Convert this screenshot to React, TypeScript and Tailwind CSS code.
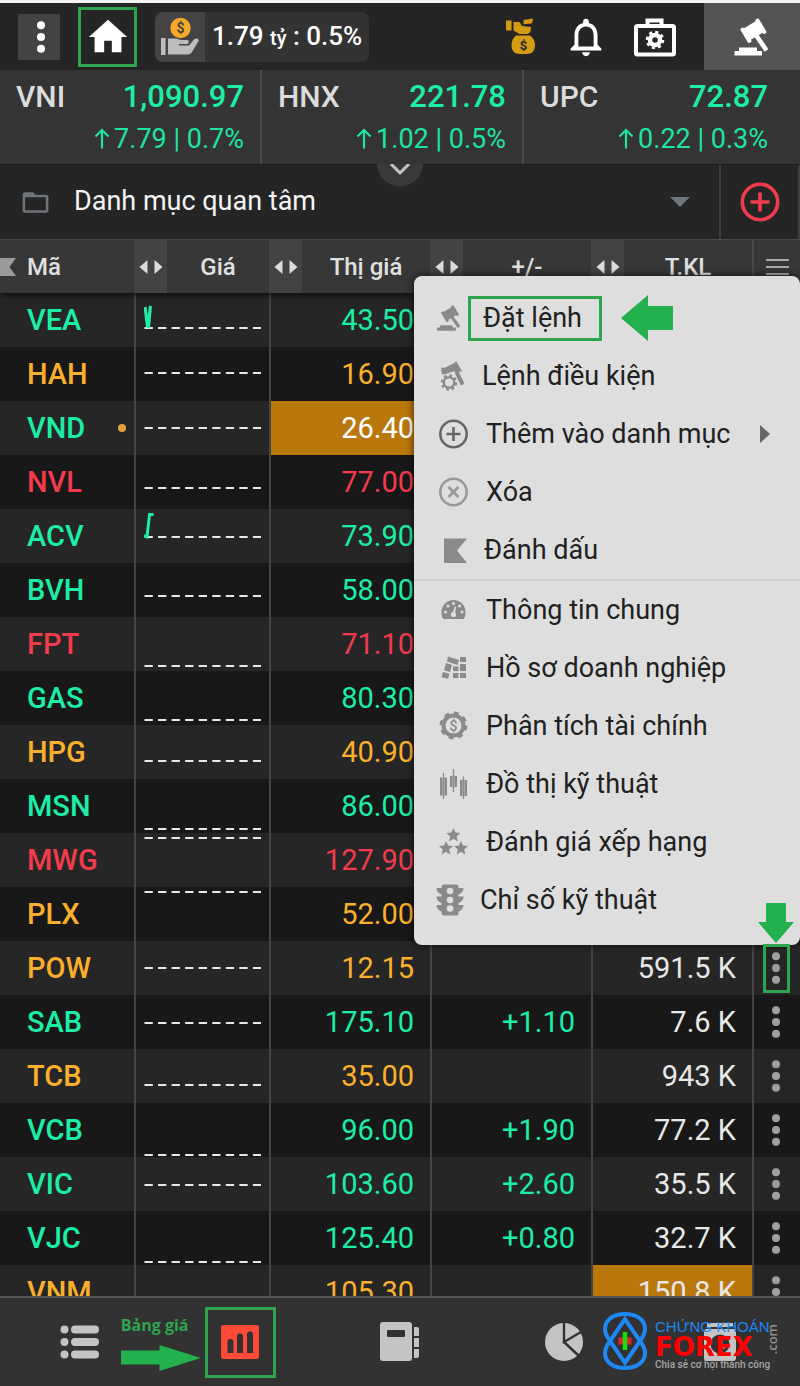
import type { ReactNode } from "react";
import { MdFolderOpen, MdHome, MdNotificationsNone } from "react-icons/md";

const UP = "text-[#1ceea6]";
const DOWN = "text-[#f23b4c]";
const FLAT = "text-[#fbb02d]";

type Stock = {
  code: string;
  color: string;
  price: string;
  change?: string;
  volume?: string;
  line?: number; // height of the reference line inside the sparkline
  spark?: string;
  dot?: boolean;
  hotPrice?: boolean;
  hotVolume?: boolean;
  marked?: boolean;
};

const stocks: Stock[] = [
  { code: "VEA", color: UP, price: "43.50", line: 35, spark: "M1 14L3.500 34L6.500 13L4.500 35" },
  { code: "HAH", color: FLAT, price: "16.90", line: 26 },
  { code: "VND", color: UP, price: "26.40", line: 27, dot: true, hotPrice: true },
  { code: "NVL", color: DOWN, price: "77.00", line: 33 },
  { code: "ACV", color: UP, price: "73.90", line: 28, spark: "M0 26.500L3 28L5.500 5.500L9.500 5.500" },
  { code: "BVH", color: UP, price: "58.00", line: 33 },
  { code: "FPT", color: DOWN, price: "71.10", line: 49 },
  { code: "GAS", color: UP, price: "80.30", line: 49 },
  { code: "HPG", color: FLAT, price: "40.90", line: 36 },
  { code: "MSN", color: UP, price: "86.00", line: 50 },
  { code: "MWG", color: DOWN, price: "127.90", line: 5 },
  { code: "PLX", color: FLAT, price: "52.00", line: 5 },
  { code: "POW", color: FLAT, price: "12.15", volume: "591.5 K", line: 27, marked: true },
  { code: "SAB", color: UP, price: "175.10", change: "+1.10", volume: "7.6 K", line: 28 },
  { code: "TCB", color: FLAT, price: "35.00", volume: "943 K", line: 36 },
  { code: "VCB", color: UP, price: "96.00", change: "+1.90", volume: "77.2 K", line: 52 },
  { code: "VIC", color: UP, price: "103.60", change: "+2.60", volume: "35.5 K", line: 28 },
  { code: "VJC", color: UP, price: "125.40", change: "+0.80", volume: "32.7 K", line: 51 },
  { code: "VNM", color: FLAT, price: "105.30", volume: "150.8 K", hotVolume: true },
];

const indexes = [
  { name: "VNI", value: "1,090.97", diff: "7.79", percent: "0.7%" },
  { name: "HNX", value: "221.78", diff: "1.02", percent: "0.5%" },
  { name: "UPC", value: "72.87", diff: "0.22", percent: "0.3%" },
];

const GavelHead = () => (
  <>
    <g transform="rotate(-31 19.700 12.300)">
      <rect x="11" y="5.500" width="17" height="13.500" />
      <rect x="8.500" y="4" width="4" height="17" rx="1.500" />
      <rect x="26" y="4" width="4" height="17" rx="1.500" />
    </g>
    <path d="M22 17L32.500 32.500" stroke="currentColor" strokeWidth="4.600" />
  </>
);

const Gavel = ({ className }: { className: string }) => (
  <svg viewBox="0 0 36 38" fill="currentColor" className={className}>
    <GavelHead />
    <path d="M5 29.500h18v3.500h5v4.500H.5V33H5z" />
  </svg>
);

const Dots = ({ className }: { className: string }) => (
  <svg viewBox="0 0 10 32" fill="currentColor" className={className}>
    <circle cx="5" cy="4.300" r="4" />
    <circle cx="5" cy="16" r="4" />
    <circle cx="5" cy="27.700" r="4" />
  </svg>
);

const STAR = "M0-7L2-2.400 7-2 3.200 1.500 4.400 6.500 0 3.800-4.400 6.500-3.200 1.500-7-2-2-2.400z";

const GavelGearIcon = () => (
  <svg width="30" height="34" viewBox="0 0 30 34" fill="currentColor">
    <path d="M5 8.500L8 9 18.500 4 20 2 26 12 23 13 17 12.500 10 15 6 15.500z" />
    <path d="M21 14L26 24" stroke="currentColor" strokeWidth="4" strokeLinecap="round" />
    <circle cx="13" cy="23.500" r="5.200" fill="none" stroke="currentColor" strokeWidth="2.300" />
    <circle cx="13" cy="23.500" r="7" fill="none" stroke="currentColor" strokeWidth="2.500" strokeDasharray="2.750 2.750" />
  </svg>
);

const PlusIcon = () => (
  <svg width="34" height="34" viewBox="0 0 34 34" fill="none" stroke="#666" strokeWidth="2.600">
    <circle cx="17.500" cy="17" r="13.200" />
    <path d="M17.500 10v14M10.500 17h14" />
  </svg>
);

const RemoveIcon = () => (
  <svg width="34" height="34" viewBox="0 0 34 34" fill="none" stroke="#999" strokeWidth="2.600">
    <circle cx="17.500" cy="17" r="13.200" />
    <path d="M12.500 12l10 10M22.500 12l-10 10" />
  </svg>
);

const FlagIcon = () => (
  <svg width="32" height="34" viewBox="0 0 32 34" fill="currentColor">
    <path d="M8 5.500h23L21 17.500l10 12.500H8z" />
  </svg>
);

const GaugeIcon = () => (
  <svg width="34" height="34" viewBox="0 0 34 34">
    <path d="M7.500 26C5.500 24 5.500 21.500 5.500 19a12 12 0 0124 0c0 2.500 0 5-2 7z" fill="currentColor" />
    <g fill="#dedede">
      <circle cx="9.500" cy="19" r="1.500" />
      <circle cx="12" cy="13" r="1.500" />
      <circle cx="17.500" cy="10.500" r="1.500" />
      <circle cx="23.500" cy="13" r="1.500" />
      <circle cx="26" cy="19" r="1.500" />
      <circle cx="17.500" cy="21.500" r="2.600" />
      <path d="M16.500 20l2.500-6.500h1.200L18.800 21z" />
    </g>
  </svg>
);

const BlocksIcon = () => (
  <svg width="34" height="34" viewBox="0 0 34 34" fill="currentColor">
    <path d="M24 6h6v5h-6zM24 13h6v7h-6zM24 22h6v5h-6zM17 15.500h5.500v4.500H17zM17 22h5.500v5H17z" />
    <path d="M12 5.500l11 3.500-1.500 5L11 10.500zM10 12l6 2-2 7-6-1.800zM7 21l6.500 1.800-1.500 5-6.500-1.600z" />
  </svg>
);

const FinanceIcon = () => (
  <svg width="34" height="34" viewBox="0 0 34 34">
    <circle cx="17.500" cy="16.500" r="10" fill="none" stroke="currentColor" strokeWidth="4" />
    <circle cx="17.500" cy="16.500" r="12.200" fill="none" stroke="currentColor" strokeWidth="3.400" strokeDasharray="4.790 4.790" />
    <text x="17.500" y="21.500" textAnchor="middle" fontSize="14" fontWeight="500" fill="currentColor">$</text>
  </svg>
);

const CandlesIcon = () => (
  <svg width="34" height="34" viewBox="0 0 34 34">
    <path d="M4 10.500h7v18H4zM14 9h7v11h-7zM24 13h7v16h-7z" fill="currentColor" />
    <path d="M7.500 10v19M17.500 8v13M27.500 12v18" stroke="#b8b8b8" strokeWidth="2.400" />
    <path d="M7.500 6v26M17.500 2v23M27.500 9.500V32" stroke="currentColor" strokeWidth="1.200" />
  </svg>
);

const StarsIcon = () => (
  <svg width="34" height="34" viewBox="0 0 34 34" fill="currentColor">
    <path d={STAR} transform="translate(17.500 10)" />
    <path d={STAR} transform="translate(10 23)" />
    <path d={STAR} transform="translate(25 23)" />
  </svg>
);

const TrafficIcon = () => (
  <svg width="28" height="34" viewBox="0 0 28 34">
    <g fill="currentColor">
      <rect x="5.500" y="1.500" width="17" height="31" rx="2.500" />
      <path d="M.5 5h27c0 3-2 5.500-5 6.500h-17C2.500 10.500.5 8 .5 5zM.5 13.500h27c0 3-2 5.500-5 6.500h-17C2.500 19 .5 16.500.5 13.500zM.5 22h27c0 3-2 5.500-5 6.500h-17C2.500 27.500.5 25 .5 22z" />
    </g>
    <g fill="#dedede">
      <circle cx="14" cy="8" r="3.300" />
      <circle cx="14" cy="17" r="3.300" />
      <circle cx="14" cy="25.500" r="3.300" />
    </g>
  </svg>
);

const menu: { label: string; icon: ReactNode; marked?: boolean; more?: boolean; first?: boolean }[] = [
  { label: "Đặt lệnh", icon: <Gavel className="h-[34px] w-[30px] py-1 pr-1" />, marked: true },
  { label: "Lệnh điều kiện", icon: <GavelGearIcon /> },
  { label: "Thêm vào danh mục", icon: <PlusIcon />, more: true },
  { label: "Xóa", icon: <RemoveIcon /> },
  { label: "Đánh dấu", icon: <FlagIcon /> },
  { label: "Thông tin chung", icon: <GaugeIcon />, first: true },
  { label: "Hồ sơ doanh nghiệp", icon: <BlocksIcon /> },
  { label: "Phân tích tài chính", icon: <FinanceIcon /> },
  { label: "Đồ thị kỹ thuật", icon: <CandlesIcon /> },
  { label: "Đánh giá xếp hạng", icon: <StarsIcon /> },
  { label: "Chỉ số kỹ thuật", icon: <TrafficIcon /> },
];

const TopBar = () => (
  <header className="flex h-[67px] shrink-0 items-center bg-[#252525] pl-[18px] text-white">
    <button aria-label="Menu" className="flex h-[46px] w-[42px] items-center justify-center bg-[#434343] pl-1">
      <Dots className="h-8 w-[10px]" />
    </button>
    <a href="#home" aria-label="Home" className="ml-[18px] flex h-[60px] w-[59px] items-center justify-center border-3 border-[#2ea44f]">
      <MdHome className="size-[46px] shrink-0" />
    </a>
    <div className="ml-[18px] flex h-[50px] items-center overflow-hidden rounded-lg bg-[#333]">
      <span className="flex h-full w-[50px] items-center justify-center bg-[#444]">
        <svg width="40" height="40" viewBox="0 0 40 40">
          <circle cx="20.500" cy="11" r="10.200" fill="#f7a928" />
          <text x="20.500" y="16" textAnchor="middle" fontSize="14" fontWeight="700" fill="#444">$</text>
          <path d="M1 21h4.500v17H1z" fill="#bdbdbd" />
          <path d="M8 21.500h8c2 0 3 1.500 5 1.500h6c2.500 0 2.500 4 0 4h-8v1.500h10l5-6c2-2 5.500-.5 4.500 1.500L32 35c-1.500 2-3 2.500-5 2.500H8z" fill="#bdbdbd" />
        </svg>
      </span>
      <span className="px-[7px] text-[26px] font-medium">
        1.79 <span className="text-[20px]">tỷ</span> : 0.5%
      </span>
    </div>
    <div className="ml-auto flex items-center">
      <button aria-label="Funds" className="mr-[26px] text-[#d39c12]">
        <svg width="32" height="37" viewBox="0 0 32 37" fill="currentColor">
          <path d="M1 2.500h5.500v10H1zM8.500 4h6l2.500 4 9 1-.5 5-3 2h-8l-6-3.500zM18.500 2L28 .500 27 5.500l-8.500.800z" />
          <path d="M11 17.500h14c2.500 2 5 5 5 9.500 0 6-3 9-8.500 9h-6.500C9.500 36 6.500 33 6.500 27c0-4.500 2-7.500 4.500-9.500z" />
          <text x="18.500" y="31.500" textAnchor="middle" fontSize="13" fontWeight="700" fill="#252525">$</text>
        </svg>
      </button>
      <button aria-label="Notifications" className="mr-6">
        <MdNotificationsNone className="size-[46px]" />
      </button>
      <button aria-label="Tools" className="mr-[27px]">
        <svg width="44" height="40" viewBox="0 0 44 40" fill="none" stroke="currentColor">
          <path d="M14.500 8V3.500h14V8" strokeWidth="4" />
          <rect x="3" y="9" width="38" height="28.500" rx="1.500" strokeWidth="4" />
          <circle cx="22" cy="23" r="5" strokeWidth="4.500" />
          <circle cx="22" cy="23" r="8" strokeWidth="2.600" strokeDasharray="3.140 3.140" />
        </svg>
      </button>
      <button aria-label="Place order" className="flex h-[67px] w-24 items-center justify-center bg-[#545454]">
        <Gavel className="h-[38px] w-9" />
      </button>
    </div>
  </header>
);

const Indexes = () => (
  <section className="relative grid h-[94px] shrink-0 grid-cols-[262fr_262fr_276fr] bg-[#343434]">
    {indexes.map((item) => (
      <div key={item.name} className="border-r-2 border-[#4c4c4c] pt-[9px] pr-4 pl-4 nth-3:border-r-0 nth-3:pr-8">
        <div className="flex items-center justify-between text-[30px] leading-9 font-medium">
          <span className="text-[#dcdcdc]">{item.name}</span>
          <span className="text-[31px] text-[#1ceea6]">{item.value}</span>
        </div>
        <div className="mt-[6px] flex items-center justify-end gap-1 text-[27px] leading-9 text-[#1fe3a1]">
          <svg width="16" height="22" viewBox="0 0 16 22" fill="none" stroke="currentColor" strokeWidth="2.200">
            <path d="M8 20.500V2M1.500 8.500L8 2l6.500 6.500" />
          </svg>
          <span>
            {item.diff} | {item.percent}
          </span>
        </div>
      </div>
    ))}
    <button aria-label="Expand" className="absolute top-full left-1/2 z-10 flex h-[22px] w-[46px] -translate-x-1/2 justify-center rounded-b-full bg-[#3a3a3a]">
      <svg width="22" height="14" viewBox="0 0 22 14" fill="none" stroke="#c4c4c4" strokeWidth="3">
        <path d="M2 0l9 9 9-9" />
      </svg>
    </button>
  </section>
);

const ListPicker = () => (
  <section className="flex h-[75px] shrink-0 border-t border-[#1c1c1c] bg-[#252525]">
    <div className="relative flex flex-1 items-center border-r-2 border-[#3f3f3f] pl-5">
      <MdFolderOpen className="size-[31px] shrink-0 text-[#6f747b]" />
      <select aria-label="Danh mục" className="h-full flex-1 appearance-none bg-transparent pb-0.5 pl-[23px] text-[27px] text-[#f4f4f4] outline-none">
        <option>Danh mục quan tâm</option>
      </select>
      <svg width="20" height="10" viewBox="0 0 20 10" className="pointer-events-none absolute right-[29px]">
        <path d="M0 0h20L10 10z" fill="#6f747b" />
      </svg>
    </div>
    <button aria-label="Thêm" className="flex w-[79px] items-center justify-center border-r-2 border-[#3f3f3f]">
      <svg width="40" height="40" viewBox="0 0 40 40" fill="none" stroke="#f23b4c" strokeWidth="3.600">
        <circle cx="20" cy="20" r="17.700" />
        <path d="M20 10.500v19M10.500 20h19" />
      </svg>
    </button>
  </section>
);

const ColumnTitle = ({ children }: { children: ReactNode }) => (
  <th className="p-0">
    <div className="flex h-[53px] items-center">
      <button aria-label="Switch column" className="flex h-full w-[33px] items-center justify-center bg-[#434343]">
        <svg width="24" height="14" viewBox="0 0 24 14" fill="#dcdcdc">
          <path d="M8.500 0v14L.5 7zM15.500 0v14l8-7z" />
        </svg>
      </button>
      <span className="flex-1 text-center">{children}</span>
    </div>
  </th>
);

const Sparkline = ({ line, path }: { line?: number; path?: string }) => (
  <svg viewBox="0 0 117 54" className="ml-2 block h-[54px] w-[117px]" fill="none">
    {line && <path d={`M.5 ${line}H117`} stroke="#e8e8e8" strokeWidth="2" strokeDasharray="8.300 5.250" />}
    {path && <path d={path} stroke="#1ceea6" strokeWidth="3" />}
  </svg>
);

const StockRow = ({ stock }: { stock: Stock }) => (
  <tr className="h-[54px] odd:bg-[#262626] even:bg-[#181818]">
    <th className={`p-0 pr-2 pl-[27px] font-medium ${stock.color}`}>
      <div className="flex items-center justify-between">
        {stock.code}
        {stock.dot && <span className="size-2 rounded-full bg-[#e5a03a]" />}
      </div>
    </th>
    <td className="border-l-2 border-[#444] p-0">
      <Sparkline line={stock.line} path={stock.spark} />
    </td>
    <td className={`border-l-2 border-[#444] p-0 pr-4 ${stock.hotPrice ? "bg-[#ba780c] text-white" : stock.color}`}>{stock.price}</td>
    <td className={`border-l-2 border-[#444] p-0 pr-4 ${stock.color}`}>{stock.change}</td>
    <td className={`border-l-2 border-[#444] p-0 pr-4 text-[#e8e8e8] ${stock.hotVolume ? "bg-[#ba780c]" : ""}`}>{stock.volume}</td>
    <td className="border-l-2 border-[#444] p-0">
      <div className="flex h-[54px] items-center justify-center pr-0.5">
        <button
          aria-label={`Menu ${stock.code}`}
          className={`relative flex h-[49px] w-[27px] items-center justify-center ${stock.marked ? "z-20 border-3 border-[#2ea44f]" : ""}`}
        >
          <Dots className="h-8 w-[10px] shrink-0 text-[#a0a0a0]" />
          {stock.marked && (
            <svg viewBox="0 0 36 40" className="absolute bottom-full left-1/2 mb-1 h-10 w-9 -translate-x-1/2" fill="#22b14c">
              <path d="M8 0h20v19h8L18 40 0 19h8z" />
            </svg>
          )}
        </button>
      </div>
    </td>
  </tr>
);

const Board = () => (
  <table className="w-full table-fixed border-separate border-spacing-0 text-[29px] leading-9">
    <colgroup>
      <col className="w-[134px]" />
      <col className="w-[135px]" />
      <col className="w-[161px]" />
      <col className="w-[161px]" />
      <col className="w-[161px]" />
      <col className="w-12" />
    </colgroup>
    <thead className="relative bg-[#373737] text-[24px] text-[#e0e0e0] shadow-[0_2px_6px_#000a] [&_th]:border-t [&_th]:border-[#4a4a4a] [&_th]:font-medium">
      <tr>
        <th className="p-0">
          <div className="flex h-[53px] items-center">
            <svg width="16" height="18" viewBox="0 0 16 18" fill="#9a9a9a">
              <path d="M0 0h16L9.500 9l6.500 9H0z" />
            </svg>
            <span className="pl-[11px]">Mã</span>
          </div>
        </th>
        <ColumnTitle>Giá</ColumnTitle>
        <ColumnTitle>Thị giá</ColumnTitle>
        <ColumnTitle>+/-</ColumnTitle>
        <ColumnTitle>T.KL</ColumnTitle>
        <th className="border-l-2 p-0">
          <button aria-label="Columns" className="flex h-[53px] w-full items-center justify-center">
            <svg width="23" height="18" viewBox="0 0 23 18" stroke="#a8a8a8" strokeWidth="2.200">
              <path d="M0 2h23M0 9h23M0 16h23" />
            </svg>
          </button>
        </th>
      </tr>
    </thead>
    <tbody className="text-right">
      {stocks.map((stock) => (
        <StockRow key={stock.code} stock={stock} />
      ))}
    </tbody>
  </table>
);

const ContextMenu = () => (
  <div role="menu" className="absolute top-[37px] right-0 z-10 w-[386px] rounded-lg bg-[#dedede] pt-[13px] pb-4 text-[27px] text-[#212121] shadow-[0_0_8px_#000a]">
    {menu.map((item) => (
      <button
        key={item.label}
        role="menuitem"
        className={`flex w-full items-center gap-4 pr-[30px] pl-[22px] text-left ${item.first ? "h-[60px] border-t-2 border-[#cfcfcf]" : "h-[58px]"}`}
      >
        <span className="shrink-0 text-[#8a8a8a]">{item.icon}</span>
        {item.marked ? (
          <>
            <span className="-ml-[14px] flex h-[45px] items-center border-3 border-[#2ea44f] pr-[17px] pl-3">{item.label}</span>
            <svg width="52" height="46" viewBox="0 0 52 46" fill="#22b14c" className="ml-[3px]">
              <path d="M0 23L27 0v11h25v24H27v11z" />
            </svg>
          </>
        ) : (
          <span>{item.label}</span>
        )}
        {item.more && (
          <svg width="10" height="18" viewBox="0 0 10 18" fill="#666" className="ml-auto">
            <path d="M0 0l10 9-10 9z" />
          </svg>
        )}
      </button>
    ))}
  </div>
);

const Logo = () => (
  <div className="absolute top-[13px] right-[22px] flex items-start gap-2">
    <svg width="44" height="60" viewBox="0 0 44 60" fill="none" stroke="#1e88f5" strokeWidth="4">
      <path d="M22 3C10 3 2 9 2 18c0 5 2 8 5 12l15 22 15-22c3-4 5-7 5-12 0-9-8-15-20-15z" />
      <path d="M22 57C10 57 2 51 2 42c0-5 2-8 5-12L22 8l15 22c3 4 5 7 5 12 0 9-8 15-20 15z" />
      <path d="M15.500 30h13" stroke="#e5202a" strokeWidth="7" />
      <path d="M22 21v18" stroke="#12e012" strokeWidth="4.500" />
    </svg>
    <div className="pt-2 whitespace-nowrap">
      <div className="flex">
        <div className="w-[111px]">
          <p className="font-['Liberation_Sans',sans-serif] text-[15px] leading-4 text-[#1e88f5]">CHỨNG KHOÁN</p>
          <p className="font-['DejaVu_Sans',sans-serif] text-[26px] leading-6 font-bold text-[#ff0000]">FOREX</p>
        </div>
        <span className="rotate-180 self-center font-['Open_Sans',sans-serif] text-[13px] leading-3 font-semibold text-[#8e8e8e] [writing-mode:vertical-rl]">.com</span>
      </div>
      <p className="font-['Roboto',sans-serif] text-[10px] leading-3 font-medium text-[#a5a5a5]">Chia sẻ cơ hội thành công</p>
    </div>
  </div>
);

const BottomNav = () => (
  <nav className="relative z-20 grid h-[90px] shrink-0 grid-cols-5 place-items-center border-t-2 border-[#555] bg-[#323232] text-[#c4c4c4]">
    <a href="#list" aria-label="Danh sách">
      <svg width="40" height="34" viewBox="0 0 40 34" fill="currentColor">
        {[4.5, 17, 29.5].map((y) => (
          <g key={y}>
            <circle cx="4.500" cy={y} r="4" />
            <rect x="11" y={y - 4} width="28" height="8" rx="4" />
          </g>
        ))}
      </svg>
    </a>
    <a href="#board" aria-label="Bảng giá" className="relative flex size-[71px] items-center justify-center border-3 border-[#2ea44f]">
      <svg width="38" height="34" viewBox="0 0 38 34">
        <rect width="38" height="34" rx="3" fill="#ff4a38" />
        <path d="M6.500 28V16.500a2.500 2.500 0 012.500-2.500h1a2.500 2.500 0 012.500 2.500V28zM16 28V11a2.500 2.500 0 012.500-2.500h1A2.500 2.500 0 0122 11v17zM26 28V9a2.500 2.500 0 012.500-2.500h1A2.500 2.500 0 0132 9v19z" fill="#323232" />
      </svg>
      <span className="absolute right-[84px] bottom-[38px] font-['Open_Sans',sans-serif] text-[16px] leading-6 font-bold whitespace-nowrap text-[#2ea44f]">Bảng giá</span>
      <svg width="80" height="26" viewBox="0 0 80 26" fill="#22b14c" className="absolute right-[72px] bottom-1">
        <path d="M0 5.500h38.500V0L80 13 38.500 26v-6.500H0z" />
      </svg>
    </a>
    <a href="#notes" aria-label="Sổ lệnh">
      <svg width="40" height="40" viewBox="0 0 40 40">
        <rect x="0" y="0" width="32" height="39" rx="3" fill="currentColor" />
        <rect x="7" y="8" width="18" height="7" rx="1" fill="#323232" />
        <path d="M34 5h3a2 2 0 012 2v7h-5zM34 16h5v9h-5zM34 27h5v7a2 2 0 01-2 2h-3z" fill="currentColor" />
      </svg>
    </a>
    <a href="#portfolio" aria-label="Tài sản" className="pl-2">
      <svg width="40" height="40" viewBox="0 0 40 40">
        <circle cx="20" cy="20" r="19" fill="currentColor" />
        <path d="M20 0v20L37 10M20 20L35 34" fill="none" stroke="#323232" strokeWidth="2.400" />
      </svg>
    </a>
    <a href="#history" aria-label="Lịch sử">
      <svg width="32" height="40" viewBox="0 0 32 40">
        <path d="M3 1h26v4H3z" fill="currentColor" />
        <rect y="7" width="32" height="32" rx="3" fill="currentColor" />
        <circle cx="16" cy="22" r="9.500" fill="#323232" />
        <path d="M16 16v7l5 3" fill="none" stroke="currentColor" strokeWidth="2.400" />
      </svg>
    </a>
    <Logo />
  </nav>
);

const App = () => {
  return (
    <div className="flex h-screen flex-col overflow-hidden border-t-3 border-[#f4f4f4] bg-[#181818] font-['Roboto',sans-serif]">
      <TopBar />
      <Indexes />
      <ListPicker />
      <main className="relative min-h-0 flex-1 overflow-hidden">
        <Board />
        <ContextMenu />
      </main>
      <BottomNav />
    </div>
  );
};

export default App;
